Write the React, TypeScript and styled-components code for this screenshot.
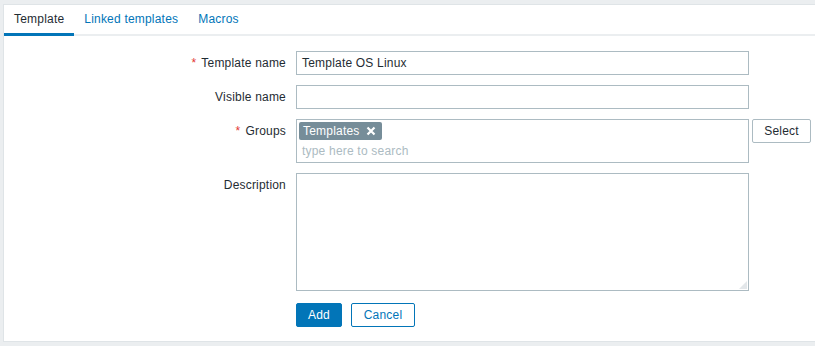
import React from "react";
import styled, { createGlobalStyle } from "styled-components";

const Global = createGlobalStyle`
  html, body { margin: 0; padding: 0; background: #ebeef0; }
  body { font-family: "Liberation Sans", Arial, sans-serif; font-size: 12px; letter-spacing: 0.2px; color: #1f2c33; }
  button { letter-spacing: 0.2px; }
  * { box-sizing: border-box; }
`;

const Page = styled.div`
  padding: 4px 0 4px 3px;
  height: 346px;
  overflow: hidden;
`;

const Card = styled.div`
  background: #fff;
  border: 1px solid #dfe4e7;
  border-right: none;
  height: 338px;
`;

const TabList = styled.div`
  display: flex;
  height: 31px;
  border-bottom: 2px solid #ebeef0;
`;

const Tab = styled.div<{ $active?: boolean }>`
  padding: 0 10px;
  height: 31px;
  line-height: 28px;
  color: ${(p) => (p.$active ? "#1f2c33" : "#0275b8")};
  border-bottom: 3px solid ${(p) => (p.$active ? "#0275b8" : "transparent")};
  margin-bottom: -2px;
  cursor: pointer;
`;

const Form = styled.div`
  display: grid;
  grid-template-columns: 282px 453px auto;
  column-gap: 10px;
  row-gap: 10px;
  padding-top: 15px;
  align-items: start;
`;

const Label = styled.div`
  text-align: right;
  padding-top: 5px;
  line-height: 14px;
`;

const Req = styled.span`
  color: #e33734;
  margin-right: 5px;
`;

const Input = styled.div`
  height: 24px;
  border: 1px solid #acbbc2;
  padding: 0 5px;
  line-height: 22px;
  background: #fff;
`;

const Multi = styled.div`
  height: 44px;
  border: 1px solid #acbbc2;
  padding: 2px 2px 0 2px;
`;

const Tag = styled.span`
  display: inline-flex;
  align-items: center;
  gap: 6px;
  background: #768d99;
  color: #fff;
  height: 18px;
  padding: 0 6px 0 4px;
  border-radius: 2px;
  line-height: 18px;
`;

const Placeholder = styled.div`
  color: #acbbc2;
  padding-left: 3px;
  margin-top: 2px;
  line-height: 18px;
`;

const SelectBtn = styled.button`
  margin-left: -7px;
  height: 24px;
  width: 59px;
  background: #fff;
  border: 1px solid #acbbc2;
  border-radius: 2px;
  font-family: inherit;
  font-size: 12px;
  color: #1f2c33;
  padding: 0;
`;

const Textarea = styled.div`
  position: relative;
  height: 118px;
  border: 1px solid #acbbc2;
`;

const Grip = styled.svg`
  position: absolute;
  right: 1px;
  bottom: 1px;
`;

const Spacer = styled.div``;

const Buttons = styled.div`
  display: flex;
  gap: 9px;
  margin-top: 2px;
`;

const Btn = styled.button<{ $primary?: boolean }>`
  height: 24px;
  padding: 0 11px;
  border-radius: 2px;
  font-family: inherit;
  font-size: 12px;
  border: 1px solid #0275b8;
  background: ${(p) => (p.$primary ? "#0275b8" : "#fff")};
  color: ${(p) => (p.$primary ? "#fff" : "#0275b8")};
  min-width: ${(p) => (p.$primary ? "46px" : "64px")};
`;

export default function App() {
  return (
    <>
      <Global />
      <Page>
        <Card>
          <TabList>
            <Tab $active>Template</Tab>
            <Tab>Linked templates</Tab>
            <Tab>Macros</Tab>
          </TabList>
          <Form>
            <Label>
              <Req>*</Req>Template name
            </Label>
            <Input>Template OS Linux</Input>
            <Spacer />

            <Label>Visible name</Label>
            <Input />
            <Spacer />

            <Label>
              <Req>*</Req>Groups
            </Label>
            <Multi>
              <Tag>
                Templates
                <svg width="10" height="10" viewBox="0 0 10 10">
                  <path d="M1.5 1.5L8.5 8.5M8.5 1.5L1.5 8.5" stroke="#fff" strokeWidth="2.2" />
                </svg>
              </Tag>
              <Placeholder>type here to search</Placeholder>
            </Multi>
            <SelectBtn>Select</SelectBtn>

            <Label>Description</Label>
            <Textarea>
              <Grip width="8" height="8" viewBox="0 0 8 8">
                <path d="M8 0V8H0Z" fill="#e3e7ea" />
              </Grip>
            </Textarea>
            <Spacer />

            <Spacer />
            <Buttons>
              <Btn $primary>Add</Btn>
              <Btn>Cancel</Btn>
            </Buttons>
            <Spacer />
          </Form>
        </Card>
      </Page>
    </>
  );
}
